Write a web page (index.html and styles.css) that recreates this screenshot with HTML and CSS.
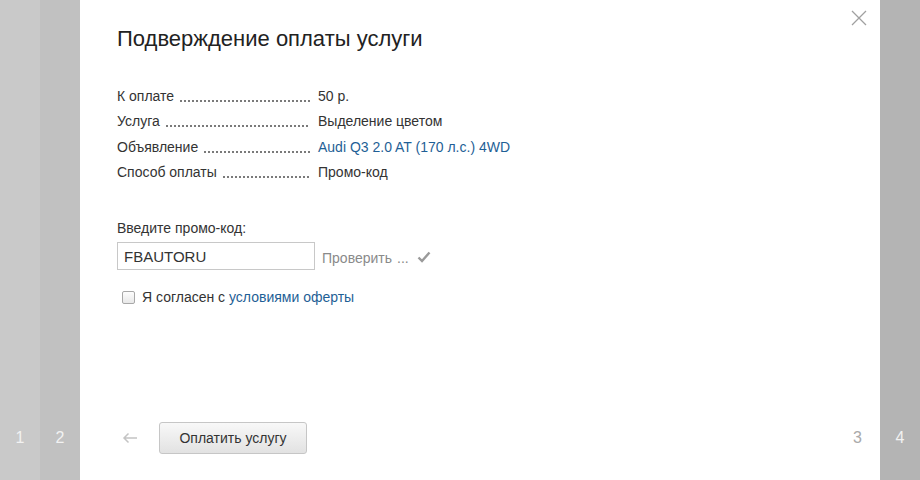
FILE: index.html
```html
<!DOCTYPE html>
<html lang="ru">
<head>
<meta charset="utf-8">
<title>Подверждение оплаты услуги</title>
<link rel="stylesheet" href="styles.css">
</head>
<body>
<div class="stage">
  <div class="strip strip-1"><span class="num">1</span></div>
  <div class="strip strip-2"><span class="num">2</span></div>
  <div class="panel">
    <button class="close" aria-label="Закрыть">
      <svg width="16" height="16" viewBox="0 0 16 16"><path d="M1 1 L15 15 M15 1 L1 15" stroke="#a0a0a0" stroke-width="1.3" fill="none"/></svg>
    </button>
    <h1 class="title">Подверждение оплаты услуги</h1>
    <div class="details">
      <div class="row"><span class="lead"><span class="label">К оплате</span><span class="dots"></span></span><span class="value">50 р.</span></div>
      <div class="row"><span class="lead"><span class="label">Услуга</span><span class="dots"></span></span><span class="value">Выделение цветом</span></div>
      <div class="row"><span class="lead"><span class="label">Объявление</span><span class="dots"></span></span><a class="value link" href="#">Audi Q3 2.0 AT (170 л.с.) 4WD</a></div>
      <div class="row"><span class="lead"><span class="label">Способ оплаты</span><span class="dots"></span></span><span class="value">Промо-код</span></div>
    </div>
    <div class="promo">
      <label class="promo-label" for="promo">Введите промо-код:</label>
      <div class="promo-line">
        <input id="promo" class="promo-input" type="text" value="FBAUTORU">
        <span class="check-text">Проверить</span>
        <span class="ellipsis">...</span>
        <svg class="tick" width="14" height="12" viewBox="0 0 14 12"><path d="M1.5 6.5 L5 10 L12.5 1.5" stroke="#9a9a9a" stroke-width="2.4" fill="none"/></svg>
      </div>
    </div>
    <label class="agree"><span class="box"></span>Я согласен с&nbsp;<a class="link" href="#">условиями оферты</a></label>
    <div class="footer">
      <svg class="back" width="16" height="12" viewBox="0 0 16 12"><path d="M15 6 H2 M6.5 1.5 L2 6 L6.5 10.5" stroke="#c4c4c4" stroke-width="1.5" fill="none"/></svg>
      <button class="pay">Оплатить услугу</button>
      <span class="num num-3">3</span>
    </div>
  </div>
  <div class="strip strip-4"><span class="num">4</span></div>
</div>
</body>
</html>
```
FILE: styles.css
```css
* { box-sizing: border-box; }
html, body { margin: 0; padding: 0; }
body {
  width: 920px;
  height: 480px;
  overflow: hidden;
  font-family: "Liberation Sans", Arial, sans-serif;
  color: #333;
}
.stage {
  display: flex;
  height: 480px;
}
.strip {
  width: 40px;
  display: flex;
  align-items: flex-end;
  justify-content: center;
  padding-bottom: 33px;
}
.strip-1 { background: #c9c9c9; }
.strip-2 { background: #c1c1c1; }
.strip-4 { background: #b4b4b4; }
.num {
  font-size: 16px;
  line-height: 18px;
  color: #f2f2f2;
}
.panel {
  position: relative;
  width: 800px;
  background: #fff;
  padding: 26px 0 0 37px;
  display: flex;
  flex-direction: column;
}
.close {
  position: absolute;
  top: 10px;
  right: 13px;
  width: 16px;
  height: 16px;
  padding: 0;
  border: 0;
  background: none;
  cursor: pointer;
}
.close svg { display: block; }
.title {
  margin: 0;
  font-weight: normal;
  font-size: 22px;
  line-height: 26px;
  color: #222;
}
.details {
  margin-top: 31px;
  font-size: 14px;
}
.row {
  display: flex;
  height: 26px;
  line-height: 26px;
}
.row:nth-child(1), .row:nth-child(3) { height: 25px; }
.lead {
  width: 201px;
  flex: 0 0 201px;
  display: flex;
}
.label {
  white-space: nowrap;
  color: #333;
}
.dots {
  flex: 1;
  margin: 0 8px 0 6px;
  background-image: linear-gradient(to right, #7a7a7a 0, #7a7a7a 2px, transparent 2px, transparent 4px);
  background-size: 4px 2px;
  background-repeat: repeat-x;
  background-position: 0 17px;
}
.value { color: #333; }
.link { color: #1f5f96; text-decoration: none; }
.promo {
  margin-top: 33px;
  font-size: 14px;
}
.promo-label {
  display: block;
  line-height: 20px;
  color: #333;
}
.promo-line {
  margin-top: 4px;
  display: flex;
  align-items: center;
}
.promo-input {
  width: 198px;
  height: 28px;
  border: 1px solid #c8c8c8;
  padding: 0 6px;
  font-family: "Liberation Sans", Arial, sans-serif;
  font-size: 15px;
  color: #333;
  outline: none;
}
.check-text {
  margin-left: 7px;
  color: #8a8a8a;
  font-size: 14px;
  padding-top: 3px;
}
.ellipsis {
  margin-left: 5px;
  color: #8a8a8a;
  padding-top: 3px;
}
.tick { margin-left: 8px; margin-top: 1px; }
.agree {
  margin-top: 17px;
  margin-left: 5px;
  display: flex;
  align-items: center;
  font-size: 14px;
  line-height: 20px;
  color: #333;
}
.box {
  width: 13px;
  height: 13px;
  border: 1px solid #a8a8a8;
  border-radius: 2px;
  background: linear-gradient(#fdfdfd, #e8e8e8);
  margin-right: 7px;
}
.footer {
  margin-top: auto;
  margin-bottom: 26px;
  display: flex;
  align-items: center;
  padding-right: 18px;
}
.back { margin-left: 5px; }
.pay {
  margin-left: 21px;
  width: 148px;
  height: 32px;
  border: 1px solid #c6c6c6;
  border-radius: 3px;
  background: linear-gradient(#f8f8f8, #e2e2e2);
  font-family: "Liberation Sans", Arial, sans-serif;
  font-size: 14px;
  color: #333;
  padding: 0;
}
.num-3 {
  margin-left: auto;
  color: #aaa;
}
```
